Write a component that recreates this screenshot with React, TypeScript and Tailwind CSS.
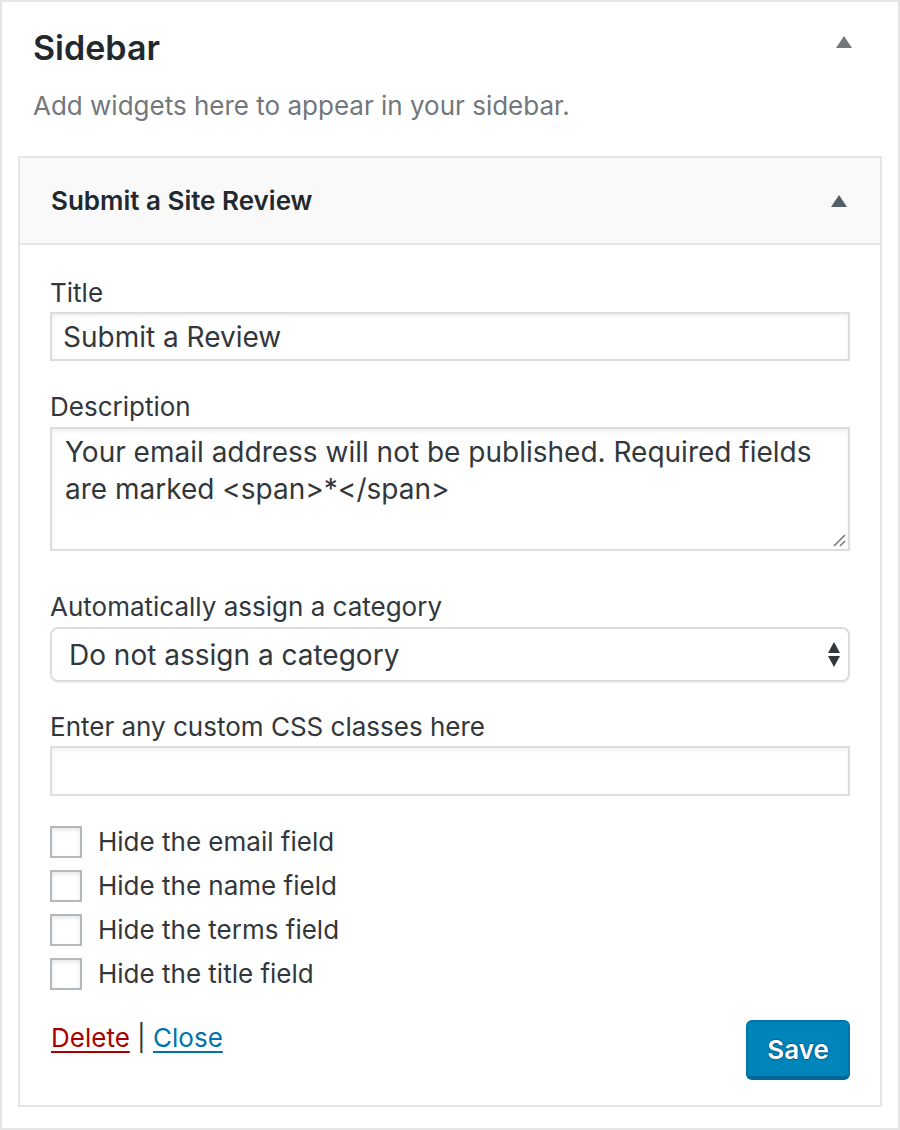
import { FC } from 'react';

const font = { fontFamily: 'Inter, "Noto Sans", sans-serif' };

const Triangle: FC<{ className: string }> = ({ className }) => (
  <svg width="16" height="12" viewBox="0 0 16 12" className={className}>
    <path d="M8 0 L16 12 L0 12 Z" fill="currentColor" />
  </svg>
);

const Checkbox: FC<{ label: string }> = ({ label }) => (
  <label className="flex items-center h-[32px]">
    <span className="w-[32px] h-[32px] border-2 border-[#b4b9be] bg-white shadow-[inset_0_2px_4px_rgba(0,0,0,0.1)]" />
    <span className="ml-[16px] text-[26px] leading-[36px] text-[#32373c]">{label}</span>
  </label>
);

const FieldLabel: FC<{ children: React.ReactNode; className?: string }> = ({ children, className }) => (
  <div className={`text-[26px] leading-[36px] text-[#32373c] ${className ?? ''}`}>{children}</div>
);

export default function App() {
  return (
    <div
      style={font}
      className="w-[900px] h-[1130px] border-2 border-[#e5e5e5] bg-white px-[16px] flex flex-col"
    >
      {/* sidebar heading */}
      <div className="h-[154px] px-[15px]">
        <div className="flex items-start justify-between pt-[24px]">
          <h2 className="text-[34px] leading-[44px] font-semibold text-[#23282d]">Sidebar</h2>
          <Triangle className="mt-[10px] mr-[15px] text-[#72777c]" />
        </div>
        <p className="mt-[18px] text-[26px] leading-[36px] text-[#72777c]">
          Add widgets here to appear in your sidebar.
        </p>
      </div>

      {/* widget */}
      <div className="h-[951px] border-2 border-[#e5e5e5] flex flex-col">
        <div className="h-[87px] bg-[#f9f9f9] border-b-2 border-[#e5e5e5] flex items-center justify-between pl-[31px] pr-[33px]">
          <h3 className="text-[26px] font-semibold text-[#23282d]">Submit a Site Review</h3>
          <Triangle className="text-[#555d66]" />
        </div>

        <div className="px-[30px] pt-[30px] flex flex-col">
          <FieldLabel>Title</FieldLabel>
          <div className="mt-[1px] h-[49px] border-2 border-[#dddddd] shadow-[inset_0_2px_4px_rgba(0,0,0,0.07)] flex items-center pl-[11px] text-[28px] text-[#32373c]">
            Submit a Review
          </div>

          <FieldLabel className="mt-[28px]">Description</FieldLabel>
          <div className="relative mt-[2px] h-[124px] border-2 border-[#dddddd] shadow-[inset_0_2px_4px_rgba(0,0,0,0.07)] pl-[13px] pt-[5px] text-[28px] leading-[37px] text-[#32373c]">
            Your email address will not be published. Required fields
            <br />
            are marked &lt;span&gt;*&lt;/span&gt;
            <svg width="14" height="14" viewBox="0 0 14 14" className="absolute right-[2px] bottom-[2px]">
              <path d="M13 2 L2 13 M13 8 L8 13" stroke="#7a7a7a" strokeWidth="1.6" />
            </svg>
          </div>

          <FieldLabel className="mt-[38px]">Automatically assign a category</FieldLabel>
          <div className="mt-[2px] h-[55px] rounded-[8px] border-2 border-[#dddddd] shadow-[0_1px_2px_rgba(0,0,0,0.07)] flex items-center justify-between pl-[17px] pr-[8px] text-[28px] text-[#32373c]">
            <span>Do not assign a category</span>
            <svg width="12" height="25" viewBox="0 0 12 25">
              <path d="M6 0 L12 11 L0 11 Z M0 14 L12 14 L6 25 Z" fill="#32373c" />
            </svg>
          </div>

          <FieldLabel className="mt-[27px]">Enter any custom CSS classes here</FieldLabel>
          <div className="mt-[1px] h-[50px] border-2 border-[#dddddd] shadow-[inset_0_2px_4px_rgba(0,0,0,0.07)]" />

          <div className="mt-[30px] flex flex-col gap-[12px]">
            <Checkbox label="Hide the email field" />
            <Checkbox label="Hide the name field" />
            <Checkbox label="Hide the terms field" />
            <Checkbox label="Hide the title field" />
          </div>

          <div className="mt-[30px] flex items-start justify-between">
            <div className="pl-[1px] text-[26px] leading-[36px] text-[#32373c]">
              <a className="text-[#aa0000] underline underline-offset-[4px]">Delete</a>
              <span> | </span>
              <a className="text-[#0073aa] underline underline-offset-[4px]">Close</a>
            </div>
            <button className="w-[104px] h-[58px] rounded-[6px] bg-[#0085ba] border-2 border-[#0073aa] border-b-[#006799] shadow-[0_2px_0_#006799] text-white text-[26px] font-semibold [text-shadow:0_-1px_1px_#006799,1px_0_1px_#006799,0_1px_1px_#006799,-1px_0_1px_#006799]">
              Save
            </button>
          </div>
        </div>
      </div>
    </div>
  );
}
